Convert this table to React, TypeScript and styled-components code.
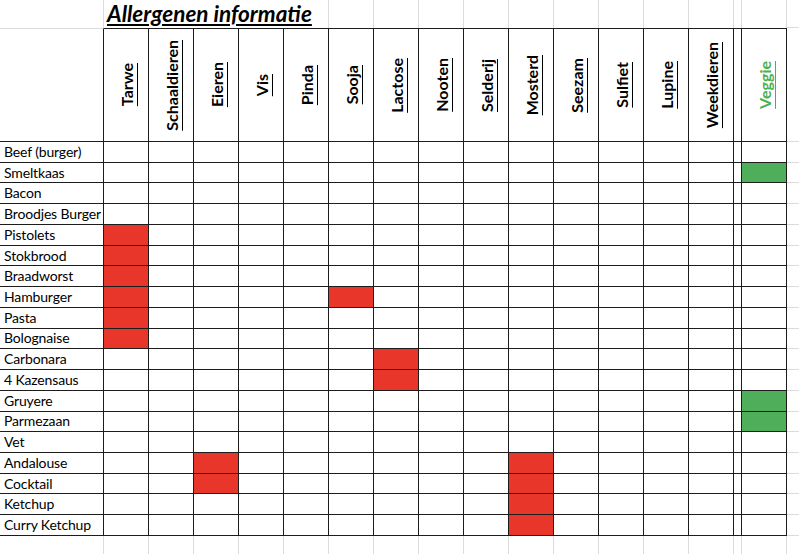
import styled, { createGlobalStyle, css } from "styled-components";

const GlobalStyle = createGlobalStyle`
  html, body {
    margin: 0;
    padding: 0;
    background: #ffffff;
  }
  body {
    font-family: Lato, "Noto Sans", "Liberation Sans", sans-serif;
    color: #000;
  }
`;

const DARK = "#1c1c1c";
const LIGHT = "#dcdcdc";
const RED = "#e9362a";
const GREEN = "#4fae5a";

const allergens = [
  "Tarwe",
  "Schaaldieren",
  "Eieren",
  "Vis",
  "Pinda",
  "Sooja",
  "Lactose",
  "Nooten",
  "Selderij",
  "Mosterd",
  "Seezam",
  "Sulfiet",
  "Lupine",
  "Weekdieren",
];

type Item = { name: string; has: string[]; veggie?: boolean };

const items: Item[] = [
  { name: "Beef (burger)", has: [] },
  { name: "Smeltkaas", has: [], veggie: true },
  { name: "Bacon", has: [] },
  { name: "Broodjes Burger", has: [] },
  { name: "Pistolets", has: ["Tarwe"] },
  { name: "Stokbrood", has: ["Tarwe"] },
  { name: "Braadworst", has: ["Tarwe"] },
  { name: "Hamburger", has: ["Tarwe", "Sooja"] },
  { name: "Pasta", has: ["Tarwe"] },
  { name: "Bolognaise", has: ["Tarwe"] },
  { name: "Carbonara", has: ["Lactose"] },
  { name: "4 Kazensaus", has: ["Lactose"] },
  { name: "Gruyere", has: [], veggie: true },
  { name: "Parmezaan", has: [], veggie: true },
  { name: "Vet", has: [] },
  { name: "Andalouse", has: ["Eieren", "Mosterd"] },
  { name: "Cocktail", has: ["Eieren", "Mosterd"] },
  { name: "Ketchup", has: ["Mosterd"] },
  { name: "Curry Ketchup", has: ["Mosterd"] },
];

export default function App() {
  return (
    <>
      <GlobalStyle />
      <Sheet>
        {/* title row */}
        <Blank $right />
        <TitleCell>
          <Title>Allergenen informatie</Title>
        </TitleCell>
        {allergens.slice(5).map((a) => (
          <Blank key={"t" + a} $right />
        ))}
        <Blank $right />
        <Blank $right />
        <Blank $bottom />

        {/* header row */}
        <CornerCell />
        {allergens.map((a) => (
          <HeadCell key={"h" + a}>
            <HeadText>{a}</HeadText>
          </HeadCell>
        ))}
        <HeadCell />
        <HeadCell>
          <HeadText $green>Veggie</HeadText>
        </HeadCell>
        <Blank $bottom />

        {/* body */}
        {items.map((it) => (
          <Row key={it.name} item={it} />
        ))}

        {/* empty sheet area below */}
        <Blank $right />
        {allergens.map((a) => (
          <Blank key={"f" + a} $right />
        ))}
        <Blank $right />
        <Blank $right />
        <Blank />
      </Sheet>
    </>
  );
}

const Row = ({ item }: { item: Item }) => (
  <>
    <RowLabel>{item.name}</RowLabel>
    {allergens.map((a) => (
      <Cell key={a} $fill={item.has.includes(a) ? RED : undefined} />
    ))}
    <Cell />
    <Cell $fill={item.veggie ? GREEN : undefined} />
    <Blank $bottom />
  </>
);

const Sheet = styled.div`
  width: 799px;
  height: 554px;
  display: grid;
  grid-template-columns: 104px repeat(14, 45px) 8px 45px 1fr;
  grid-template-rows: 28px 114px repeat(19, 20.74px) 1fr;
  overflow: hidden;
`;

const Blank = styled.div<{ $right?: boolean; $bottom?: boolean }>`
  ${(p) => p.$right && css`border-right: 1px solid ${LIGHT};`}
  ${(p) => p.$bottom && css`border-bottom: 1px solid ${LIGHT};`}
`;

const TitleCell = styled.div`
  grid-column: span 5;
  border-right: 1px solid ${LIGHT};
  display: flex;
  align-items: flex-end;
  padding: 0 0 3px 3px;
`;

const Title = styled.span`
  font-size: 22.5px;
  font-weight: 700;
  font-style: italic;
  text-decoration: underline;
  text-decoration-thickness: 1.5px;
  text-underline-offset: 2px;
  line-height: 1;
  white-space: nowrap;
`;

const CornerCell = styled.div`
  border-top: 1px solid ${LIGHT};
  border-right: 1px solid ${DARK};
  border-bottom: 1px solid ${DARK};
`;

const HeadCell = styled.div`
  border-top: 1px solid ${DARK};
  border-right: 1px solid ${DARK};
  border-bottom: 1px solid ${DARK};
  display: flex;
  align-items: center;
  justify-content: center;
`;

const HeadText = styled.span<{ $green?: boolean }>`
  writing-mode: vertical-rl;
  transform: rotate(180deg);
  font-size: 16px;
  font-weight: 700;
  text-decoration: underline;
  text-underline-offset: 2px;
  color: ${(p) => (p.$green ? "#4cb050" : "#000")};
  white-space: nowrap;
`;

const RowLabel = styled.div`
  border-right: 1px solid ${DARK};
  border-bottom: 1px solid ${DARK};
  font-size: 14px;
  letter-spacing: -0.15px;
  line-height: 1;
  padding-left: 4px;
  display: flex;
  align-items: center;
  white-space: nowrap;
`;

const Cell = styled.div<{ $fill?: string }>`
  border-right: 1px solid ${DARK};
  border-bottom: 1px solid ${DARK};
  background: ${(p) => p.$fill ?? "transparent"};
`;
